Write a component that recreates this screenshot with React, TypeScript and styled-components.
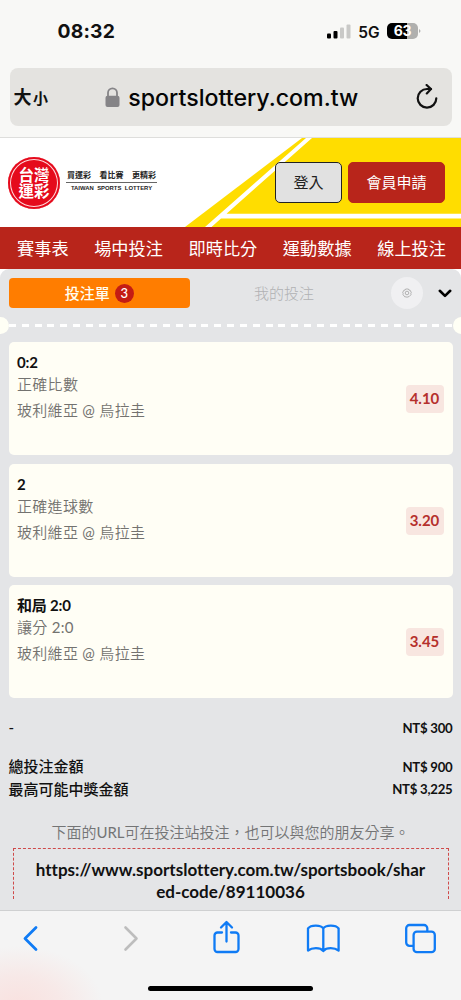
import React from "react";
import styled, { createGlobalStyle } from "styled-components";

const GlobalStyle = createGlobalStyle`
  * { box-sizing: border-box; }
  body { margin: 0; background: #f8f8f6; }
  p { margin: 0; }
  button { font: inherit; padding: 0; border: 0; background: none; cursor: pointer; }
`;

const page = `Lato, "Noto Sans CJK TC", sans-serif`;
const pageLight = `Lato, "Noto Sans CJK TC DemiLight", "Noto Sans CJK TC Light", "Noto Sans CJK TC", sans-serif`;
const system = `Inter, "Noto Sans CJK TC", sans-serif`;

const Screen = styled.main`
  width: 461px;
  height: 1000px;
  overflow: hidden;
  display: flex;
  flex-direction: column;
  font-family: ${page};
  font-variant-ligatures: none;
  color: #111;
`;

const StatusBar = styled.div`
  height: 68px;
  flex: none;
  display: flex;
  justify-content: space-between;
  align-items: center;
  padding: 0 40px 6px 57.5px;
  background: #f8f8f6;
  font-family: ${system};
`;
const Clock = styled.span`
  font-size: 19.3px;
  font-weight: 700;
  letter-spacing: 0.2px;
`;
const Indicators = styled.div`
  display: flex;
  align-items: center;
`;
const Network = styled.span`
  font-size: 15.5px;
  font-weight: 600;
  margin: 2px 7.5px 0 7px;
`;
const BatteryShell = styled.span`
  width: 31px;
  height: 16px;
  border-radius: 5px;
  background: linear-gradient(90deg, #000 0 63%, #b0b0ae 63%);
  color: #fff;
  font: 700 14px/16px ${system};
  letter-spacing: -0.3px;
  text-align: center;
`;

const AddressArea = styled.div`
  height: 70px;
  flex: none;
  padding: 0 9.5px;
  background: #f8f8f6;
  border-bottom: 1px solid #dededc;
`;
const AddressBar = styled.div`
  height: 58px;
  border-radius: 8px;
  background: #e4e3e0;
  display: flex;
  align-items: center;
  font-family: ${system};
  padding: 0 14px 0 4px;
`;
const TextSize = styled.span`
  font-weight: 700;
  font-size: 18px;
  line-height: 24px;
  padding-top: 2px;
  small { font-size: 15px; margin-left: 1.5px; }
`;
const Host = styled.span`
  flex: 1;
  display: flex;
  align-items: center;
  justify-content: center;
  gap: 8px;
  padding-top: 1px;
  font-size: 23.2px;
  font-weight: 500;
  color: #050505;
`;

const Banner = styled.header`
  position: relative;
  height: 89px;
  flex: none;
  display: flex;
  align-items: center;
  padding: 0 16px 0 8px;
  background: #fff;
`;
const BannerArt = styled.svg`
  position: absolute;
  inset: 0;
`;
const Brand = styled.div`
  display: flex;
  align-items: center;
  gap: 6px;
  flex: 1;
`;
const Seal = styled.div`
  width: 52px;
  height: 52px;
  border-radius: 50%;
  background: #e50a1c;
  box-shadow: inset 0 0 0 2px #e50a1c, inset 0 0 0 3px #ffd9dc;
  padding: 9px 8px 0;
  color: #fff;
  text-align: center;
  font: 700 15.5px/16px "Noto Sans CJK TC", sans-serif;
`;
const Slogan = styled.div`
  width: 91px;
  margin-bottom: 5px;
  text-align: center;
  color: #222;
`;
const SloganZh = styled.p`
  font: 700 8px/13px "Noto Sans CJK TC", sans-serif;
  border-bottom: 1px solid #666;
  display: flex;
  justify-content: space-between;
  padding: 0 1px 1px;
`;
const SloganEn = styled.p`
  font: 700 5.9px/10px "Liberation Sans", Arial, sans-serif;
  word-spacing: 1.8px;
  white-space: nowrap;
`;
const HeaderButton = styled.button<{ $primary?: boolean }>`
  position: relative;
  width: ${(p) => (p.$primary ? 97 : 67)}px;
  height: 41px;
  margin-left: ${(p) => (p.$primary ? 6 : 0)}px;
  padding-bottom: 2px;
  border-radius: 5px;
  border: 1px solid ${(p) => (p.$primary ? "#b8251b" : "#222")};
  background: ${(p) => (p.$primary ? "#b8251b" : "#e1e1e1")};
  color: ${(p) => (p.$primary ? "#fff" : "#222")};
  font-size: 15px;
`;

const Nav = styled.nav`
  height: 42px;
  flex: none;
  background: #b8251b;
  color: #fff;
  display: flex;
  justify-content: space-between;
  align-items: center;
  padding: 0 15px 2px 17px;
  font-size: 17.2px;
  white-space: nowrap;
`;

const SlipWrap = styled.section`
  background: #fff;
  height: 641px;
  flex: none;
  overflow: hidden;
`;
const Slip = styled.div`
  height: 100%;
  background: #e4e5e7;
  border-radius: 9px 9px 0 0;
  padding: 9px 8.5px 0;
`;
const Tabs = styled.div`
  height: 30px;
  display: flex;
  align-items: center;
`;
const Tab = styled.button<{ $active?: boolean }>`
  width: ${(p) => (p.$active ? 181.5 : 188)}px;
  height: 30px;
  border-radius: 4px;
  background: ${(p) => (p.$active ? "#ff7d00" : "transparent")};
  color: ${(p) => (p.$active ? "#fffdf0" : "#b0b1b3")};
  font-size: 15px;
  font-weight: ${(p) => (p.$active ? 500 : 300)};
  display: flex;
  align-items: center;
  justify-content: center;
  gap: 5px;
`;
const TabLabel = styled.span`
  margin-top: -2px;
`;
const Count = styled.span`
  width: 19px;
  height: 19px;
  border-radius: 50%;
  background: #c41c14;
  color: #fff;
  font: 500 13px/19px ${page};
`;
const Gear = styled.button`
  width: 32px;
  height: 32px;
  border-radius: 50%;
  background: #f0f0f2;
  margin: 0 14.5px 0 13px;
  display: grid;
  place-items: center;
`;
const Perforation = styled.div`
  height: 17px;
  margin: 9px -17px 8px;
  display: flex;
  align-items: center;
  justify-content: space-between;
`;
const Notch = styled.i`
  width: 17px;
  height: 17px;
  border-radius: 50%;
  background: #fffff5;
`;
const Dashes = styled.i`
  flex: 1;
  height: 3px;
  background: repeating-linear-gradient(90deg, #fff 0 7px, transparent 7px 12.83px);
`;

const Card = styled.article`
  height: 113px;
  margin-bottom: 8.7px;
  padding: 9px 9px 8px 8.5px;
  border-radius: 5px;
  background: #fffef5;
  display: flex;
  align-items: center;
  justify-content: space-between;
`;
const Bet = styled.div`
  align-self: flex-start;
  font-size: 15px;
  color: #73726f;
  font-family: ${pageLight};
  letter-spacing: 0.3px;
`;
const Pick = styled.p`
  font: 700 15px/22px ${page};
  color: #111;
  letter-spacing: -0.2px;
`;
const Market = styled.p`
  line-height: 23px;
`;
const Match = styled.p`
  line-height: 28px;
`;
const Odds = styled.span`
  width: 38px;
  height: 28px;
  border-radius: 4px;
  background: #f8e6e0;
  color: #b5302c;
  font-weight: 700;
  font-size: 15px;
  line-height: 27px;
  text-align: center;
`;

const Amount = styled.div<{ $gap?: number }>`
  display: flex;
  justify-content: space-between;
  align-items: center;
  height: 22.5px;
  margin-top: ${(p) => p.$gap ?? 0}px;
  font-size: 15px;
  font-weight: 500;
`;
const Price = styled.span`
  font-size: 13.2px;
  font-weight: 700;
  letter-spacing: -0.25px;
  padding-top: 2px;
`;
const Hint = styled.p`
  margin-top: 21px;
  font-size: 15px;
  line-height: 24px;
  font-family: ${pageLight};
  color: #737475;
  text-align: center;
`;
const ShareBox = styled.div`
  height: 51px;
  margin: 4px 4px 0;
  border: 1px dashed #cf4a4a;
  border-bottom: 0;
  text-align: center;
  font-weight: 700;
  font-size: 17.05px;
  line-height: 21.3px;
  padding-top: 10px;
  p { white-space: nowrap; margin: 0 -10px; }
`;

const Toolbar = styled.footer`
  height: 90px;
  flex: none;
  border-top: 1px solid #cfd0d1;
  background: radial-gradient(ellipse 85px 60px at 18px 95px, #f9e1df 0, rgba(249, 225, 223, 0.6) 50%, rgba(244, 244, 244, 0) 100%), #f4f4f4;
  display: flex;
  flex-direction: column;
  align-items: center;
`;
const Actions = styled.div`
  width: 100%;
  height: 75px;
  padding: 8px 0 0 8px;
  display: flex;
  gap: 49px;
`;
const Action = styled.button`
  width: 48px;
  height: 40px;
  flex: none;
  display: grid;
  place-items: center;
`;
const HomeIndicator = styled.div`
  width: 165px;
  height: 5px;
  border-radius: 3px;
  background: #000;
`;

const bets = [
  { pick: "0:2", market: "正確比數", odds: "4.10" },
  { pick: "2", market: "正確進球數", odds: "3.20" },
  { pick: "和局 2:0", market: "讓分 2:0", odds: "3.45" },
];

const blue = { fill: "none", stroke: "#0f7bf5", strokeWidth: 2.3, strokeLinecap: "round", strokeLinejoin: "round" } as const;

export default function App() {
  return (
    <Screen>
      <GlobalStyle />
      <StatusBar>
        <Clock>08:32</Clock>
        <Indicators>
          <svg width="24" height="15" viewBox="0 0 24 15">
            <rect x="0" y="9.5" width="4" height="5" rx="1" fill="#000" />
            <rect x="6.5" y="7" width="4" height="7.5" rx="1" fill="#000" />
            <rect x="13" y="3.5" width="4" height="11" rx="1" fill="#c9c9c7" />
            <rect x="19.5" y="0.5" width="4" height="14" rx="1" fill="#c9c9c7" />
          </svg>
          <Network>5G</Network>
          <BatteryShell>63</BatteryShell>
          <svg width="3" height="6" viewBox="0 0 3 6"><path d="M1 1Q4 3 1 5Z" fill="#b0b0ae" /></svg>
        </Indicators>
      </StatusBar>
      <AddressArea>
        <AddressBar>
          <TextSize>大<small>小</small></TextSize>
          <Host>
            <svg width="15" height="21" viewBox="0 0 15 21">
              <path d="M3 10V5.8a4.5 4.5 0 0 1 9 0V10" fill="none" stroke="#858487" strokeWidth="1.8" />
              <rect x="0.5" y="8.7" width="14" height="11.3" rx="2" fill="#858487" />
            </svg>
            sportslottery.com.tw
          </Host>
          <svg width="22" height="26" viewBox="0 0 22 26" fill="none" stroke="#111" strokeWidth="2.2" strokeLinecap="round" strokeLinejoin="round">
            <path d="M20.300 14.300A9.300 9.300 0 1 1 11 5h4" />
            <path d="M10.600 1 15 5.100 10.800 9.400" />
          </svg>
        </AddressBar>
      </AddressArea>
      <Banner>
        <BannerArt width="461" height="89" viewBox="0 0 461 89">
          <path d="M302 0H461V89H185Z" fill="#ffdd00" />
          <path d="M306 0h6L226.500 75.700H461v4.800H221L211.500 89H205Z" fill="#fff" />
        </BannerArt>
        <Brand>
          <Seal>台灣<br />運彩</Seal>
          <Slogan>
            <SloganZh><span>買運彩</span><span>看比賽</span><span>更精彩</span></SloganZh>
            <SloganEn>TAIWAN SPORTS LOTTERY</SloganEn>
          </Slogan>
        </Brand>
        <HeaderButton>登入</HeaderButton>
        <HeaderButton $primary>會員申請</HeaderButton>
      </Banner>
      <Nav>
        <span>賽事表</span><span>場中投注</span><span>即時比分</span><span>運動數據</span><span>線上投注</span>
      </Nav>
      <SlipWrap>
        <Slip>
          <Tabs>
            <Tab $active><TabLabel>投注單</TabLabel><Count>3</Count></Tab>
            <Tab><TabLabel>我的投注</TabLabel></Tab>
            <Gear>
              <svg width="10" height="10" viewBox="0 0 10 10" fill="none" stroke="#aaa" strokeWidth="0.9">
                <path d="M3.6 1h2.8l.5 1.1 1.2.1L9.3 4.6 8.8 5.5l.2 1.2-2 2-1 .1L5 9.3l-1-.5-1.2.1L1 6.6l.2-1.1L.7 4.5l1.200-2.300 1.200-.1Z" />
                <circle cx="5" cy="5" r="1.8" />
              </svg>
            </Gear>
            <svg width="14" height="9" viewBox="0 0 14 9" fill="none" stroke="#000" strokeWidth="2.6" strokeLinecap="round" strokeLinejoin="round"><path d="M1.800 1.800 7 6.900 12.200 1.800" /></svg>
          </Tabs>
          <Perforation><Notch /><Dashes /><Notch /></Perforation>
          {bets.map((b) => (
            <Card key={b.pick}>
              <Bet>
                <Pick>{b.pick}</Pick>
                <Market>{b.market}</Market>
                <Match>玻利維亞 @ 烏拉圭</Match>
              </Bet>
              <Odds>{b.odds}</Odds>
            </Card>
          ))}
          <Amount $gap={17}><span>-</span><Price>NT$ 300</Price></Amount>
          <Amount $gap={16.500}><span>總投注金額</span><Price>NT$ 900</Price></Amount>
          <Amount><span>最高可能中獎金額</span><Price>NT$ 3,225</Price></Amount>
          <Hint>下面的URL可在投注站投注，也可以與您的朋友分享。</Hint>
          <ShareBox>
            <p>https://www.sportslottery.com.tw/sportsbook/shar</p>
            <p>ed-code/89110036</p>
          </ShareBox>
        </Slip>
      </SlipWrap>
      <Toolbar>
        <Actions>
          <Action aria-label="Back">
            <svg width="20" height="40" viewBox="0 0 20 40" {...blue} strokeWidth={2.8}><path d="M14 8.500 3 19.500 14 30.500" /></svg>
          </Action>
          <Action aria-label="Forward">
            <svg width="20" height="40" viewBox="0 0 20 40" {...blue} stroke="#bdbdbd" strokeWidth={2.6}><path d="M6.500 8.500 17.500 19.500 6.500 30.500" /></svg>
          </Action>
          <Action aria-label="Share">
            <svg width="28" height="40" viewBox="0 0 28 40" {...blue}>
              <path d="M10 13.500H5.500a3 3 0 0 0-3 3V30a3 3 0 0 0 3 3H23.500a3 3 0 0 0 3-3V16.500a3 3 0 0 0-3-3H19M14.500 22.500V4M9 8.500 14.500 3 20 8.500" />
            </svg>
          </Action>
          <Action aria-label="Bookmarks">
            <svg width="34" height="40" viewBox="0 0 34 40" {...blue}>
              <path d="M17.300 9.500C15 5.800 5 5.500 2 9.500V31.500C6 28.500 14 28 17.300 32 20.600 28 28.600 28.500 32.600 31.500V9.500C29.600 5.500 19.600 5.800 17.300 9.500V32" />
            </svg>
          </Action>
          <Action aria-label="Tabs">
            <svg width="32" height="40" viewBox="0 0 32 40" {...blue}>
              <path d="M9 26.800H5.500A3.300 3.300 0 0 1 2.200 23.500V9.300A3.300 3.300 0 0 1 5.500 6H20A3.300 3.300 0 0 1 23.300 9.300V12" />
              <rect x="9.600" y="12.700" width="21.200" height="20.500" rx="3.300" />
            </svg>
          </Action>
        </Actions>
        <HomeIndicator />
      </Toolbar>
    </Screen>
  );
}
